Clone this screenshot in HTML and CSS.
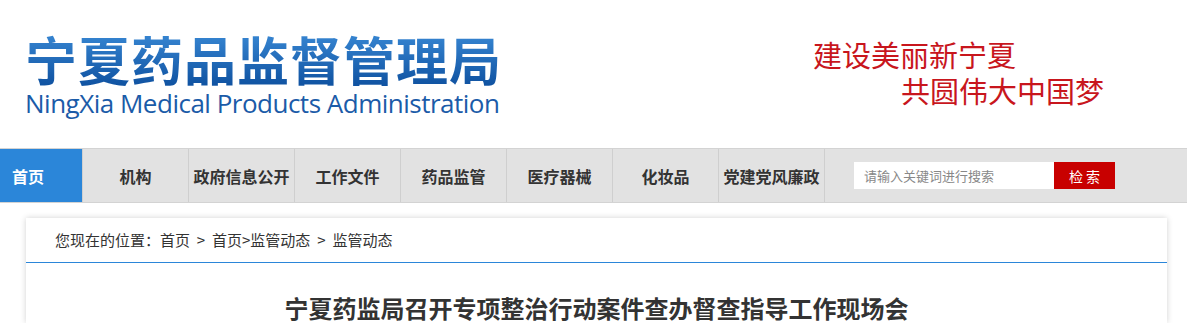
FILE: index.html
```html
<!DOCTYPE html>
<html>
<head>
  <meta charset="utf-8">
  <title>宁夏药品监督管理局 - 监管动态</title>
  <link rel="stylesheet" href="styles.css">
</head>
<body>
  <div class="header">
    <div class="logo">
      <div class="logo-cn">宁夏药品监督管理局</div>
      <div class="logo-en">NingXia Medical Products Administration</div>
    </div>
    <div class="slogan">
      <div class="slogan-1">建设美丽新宁夏</div>
      <div class="slogan-2">共圆伟大中国梦</div>
    </div>
  </div>

  <nav class="navbar">
    <a class="nav-home" href="/">首页</a>
    <a href="#">机构</a>
    <a href="#">政府信息公开</a>
    <a href="#">工作文件</a>
    <a href="#">药品监管</a>
    <a href="#">医疗器械</a>
    <a href="#">化妆品</a>
    <a class="nav-last" href="#">党建党风廉政</a>
    <form class="search">
      <input type="text" placeholder="请输入关键词进行搜索">
      <button type="button">检 索</button>
    </form>
  </nav>

  <div class="main">
    <div class="card">
      <div class="crumbs">您现在的位置：首页 &gt; 首页&gt;监管动态 &gt; 监管动态</div>
      <h1 class="title">宁夏药监局召开专项整治行动案件查办督查指导工作现场会</h1>
    </div>
  </div>
</body>
</html>
```

FILE: styles.css
```css
body { margin: 0; padding: 0; font-family: "Noto Sans CJK SC", "Noto Sans", sans-serif; color: #333; background: #fff; overflow: hidden; }

.header { height: 148px; display: flex; padding-left: 25px; }
.logo { padding-top: 29px; }
.logo-cn { font-size: 52px; line-height: 60px; font-weight: 700; letter-spacing: 1px; background: linear-gradient(#3a8ad6, #0d4f9e); -webkit-background-clip: text; background-clip: text; color: transparent; }
.logo-en { font-family: "Open Sans", "Noto Sans", sans-serif; font-size: 26px; line-height: 28px; color: #1b5ba8; letter-spacing: -0.5px; }
.slogan { margin-left: 311px; padding-top: 36px; color: #c8161d; font-size: 29px; line-height: 36px; }
.slogan-2 { padding-left: 88px; }

.navbar { height: 53px; display: flex; align-items: stretch; background: #e2e2e2; border-top: 1px solid #d3d3d3; border-bottom: 1px solid #d3d3d3; }
.navbar a { width: 105px; display: flex; align-items: center; justify-content: center; font-size: 16px; font-weight: 700; color: #333; text-decoration: none; border-left: 1px solid #cfcfcf; }
.navbar a.nav-home { width: 70px; padding-left: 12px; justify-content: flex-start; background: #2b86d9; color: #fff; border-left: none; }
.navbar a.nav-last { border-right: 1px solid #cfcfcf; }
.search { display: flex; align-items: center; margin-left: 29px; }
.search input { width: 190px; height: 27px; padding: 0 0 0 10px; border: none; outline: none; font-family: inherit; font-size: 13px; background: #fff; }
.search input::placeholder { color: #888; }
.search button { width: 61px; height: 27px; border: none; background: #c80000; color: #fff; font-family: inherit; font-size: 14px; padding: 0; }

.main { padding: 15px 20px 0 26px; }
.card { box-shadow: 0 0 6px rgba(0, 0, 0, 0.18); background: #fff; }
.crumbs { height: 44px; line-height: 44px; padding-left: 29px; font-size: 15px; word-spacing: 3.5px; border-bottom: 1px solid #2b86d9; }
.title { margin: 0; padding-top: 30px; text-align: center; font-size: 24px; font-weight: 700; line-height: 30px; color: #333; }
```
